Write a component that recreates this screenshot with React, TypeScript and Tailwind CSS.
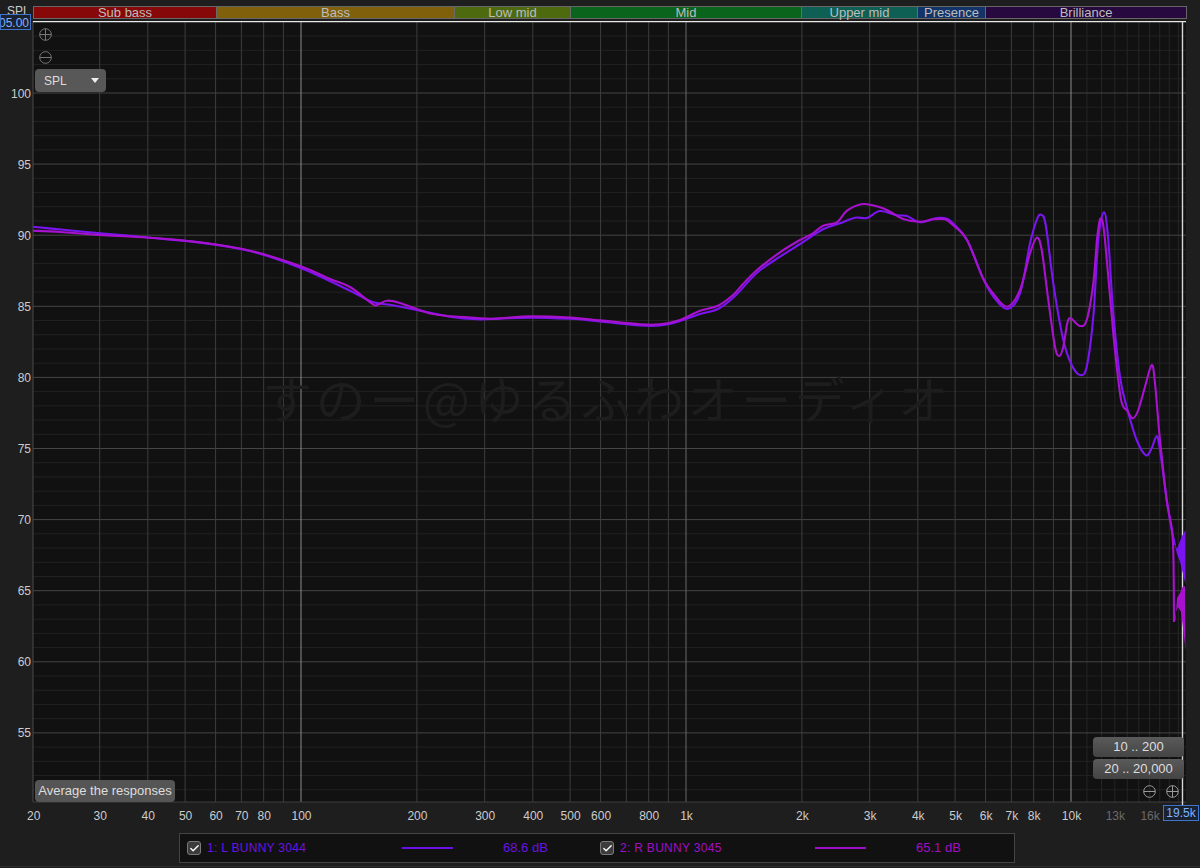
import type { ReactNode } from "react";
import { Check } from "lucide-react";

const bands = [
  { label: "Sub bass", width: "w-[183px]", bg: "bg-[#870808]" },
  { label: "Bass", width: "w-[238px]", bg: "bg-[#80600b]" },
  { label: "Low mid", width: "w-[116px]", bg: "bg-[#4e6a0e]" },
  { label: "Mid", width: "w-[231px]", bg: "bg-[#0a641c]" },
  { label: "Upper mid", width: "w-[116px]", bg: "bg-[#0e6055]" },
  { label: "Presence", width: "w-[68px]", bg: "bg-[#123468]" },
  { label: "Brilliance", width: "w-[201px]", bg: "bg-[#27093f]" },
];

const xOf = (f: number) => 301 + Math.log10(f / 100) * 385;
const yOf = (db: number) => 93 + (100 - db) * 14.22;

const xMajor = [30, 40, 50, 60, 70, 80, 90, 200, 300, 400, 500, 600, 700, 800, 900, 2000, 3000, 4000, 5000, 6000, 7000, 8000, 9000];
const xBright = [100, 10000];
const xMinor = [11000, 12000, 13000, 14000, 15000, 16000, 17000, 18000, 19000];
const xLabels: [number, string, string][] = [
  [20.15, "20", "#cccccc"], [30, "30", "#cccccc"], [40, "40", "#cccccc"], [50, "50", "#cccccc"], [60, "60", "#cccccc"],
  [70, "70", "#cccccc"], [80, "80", "#cccccc"], [100, "100", "#cccccc"], [200, "200", "#cccccc"], [300, "300", "#cccccc"],
  [400, "400", "#cccccc"], [500, "500", "#cccccc"], [600, "600", "#cccccc"], [800, "800", "#cccccc"], [1000, "1k", "#cccccc"],
  [2000, "2k", "#cccccc"], [3000, "3k", "#cccccc"], [4000, "4k", "#cccccc"], [5000, "5k", "#cccccc"], [6000, "6k", "#cccccc"],
  [7000, "7k", "#cccccc"], [8000, "8k", "#cccccc"], [10000, "10k", "#cccccc"], [13000, "13k", "#6a6a6a"], [16000, "16k", "#6a6a6a"],
];
const dbLabels = [100, 95, 90, 85, 80, 75, 70, 65, 60, 55];
const dbMinor: number[] = [];
for (let d = 51; d <= 105; d++) if (d % 5 !== 0) dbMinor.push(d);

// traced from the picture, page pixels
const left: [number, number][] = [
  [33, 226.7], [66, 230], [100, 233.3], [150, 237.7], [200, 242.6], [250, 251], [300, 267.7], [350, 290.7], [372, 301.7], [393, 305.3],
  [417, 310], [450, 316.7], [477, 319.3], [500, 318.6], [530, 317.6], [570, 318.8], [600, 321.5], [640, 325.5], [660, 325.5], [680, 321],
  [700, 314], [718, 309], [735, 296], [757, 272.7], [780, 256.7], [800, 244], [823, 229.3], [840, 223.3], [855, 217.7], [867, 218],
  [880, 211], [897, 215.3], [907, 216], [920, 222.3], [937, 218], [947, 218.7], [953, 223.3], [967, 240], [983, 278.3], [993, 296],
  [1007, 309], [1020, 293.3], [1030, 243.3], [1036.7, 220], [1041, 214.7], [1045.7, 225], [1053.3, 283.3], [1063.3, 340], [1071.7, 365],
  [1080, 375], [1086.7, 366.7], [1093.3, 316.7], [1098.3, 240], [1104, 212.3], [1108.3, 240], [1113.3, 313.3], [1120, 376.7], [1126.7, 406.7],
  [1136.7, 440], [1146, 455.3], [1151.7, 448], [1156.7, 436], [1160, 450], [1166.7, 500], [1171.7, 530], [1175, 545],
];
const right: [number, number][] = [
  [33, 230.7], [60, 232], [100, 235], [150, 237.7], [200, 242.3], [250, 250.7], [300, 266], [330, 279], [350, 287], [373, 304.3], [378, 304.5],
  [387, 300.7], [400, 303], [433, 314], [467, 317.3], [490, 318.7], [510, 317.6], [530, 316.4], [570, 317.6], [600, 320.4], [640, 324.3], [660, 324.3], [680, 320],
  [700, 310.7], [718, 305.7], [733, 295], [743, 284], [757, 270], [780, 252.3], [800, 240], [813, 233.3], [823, 225.7], [837, 222.3], [847, 210.7],
  [863, 204], [880, 207.3], [890, 211.7], [903, 219], [920, 221.7], [933, 219.3], [945, 219.3], [953, 225], [967, 240], [983, 278.3], [993, 293.3],
  [1007, 306.7], [1020, 290], [1030, 253.3], [1036.7, 237.7], [1041.7, 250], [1048.3, 300], [1055, 346.7], [1059.3, 356], [1063.3, 346.7],
  [1067.3, 323.3], [1070.7, 318.3], [1080, 326], [1086.7, 320], [1093.3, 283.3], [1097.3, 236.7], [1101, 218.3], [1105, 240], [1113.3, 333.3],
  [1120, 393.3], [1123.3, 406.7], [1126.7, 410], [1132.7, 418.3], [1138.3, 410], [1145, 386.7], [1151.7, 365], [1155, 383.3], [1160, 440],
  [1166.7, 500], [1172, 530], [1173.5, 560], [1174, 622],
];

function smooth(pts: [number, number][]) {
  let d = `M${pts[0][0]} ${pts[0][1]}`;
  for (let i = 0; i < pts.length - 1; i++) {
    const p0 = pts[Math.max(i - 1, 0)];
    const p1 = pts[i];
    const p2 = pts[i + 1];
    const p3 = pts[Math.min(i + 2, pts.length - 1)];
    const c1x = p1[0] + (p2[0] - p0[0]) / 6;
    const c1y = p1[1] + (p2[1] - p0[1]) / 6;
    const c2x = p2[0] - (p3[0] - p1[0]) / 6;
    const c2y = p2[1] - (p3[1] - p1[1]) / 6;
    d += ` C${c1x.toFixed(1)} ${c1y.toFixed(1)} ${c2x.toFixed(1)} ${c2y.toFixed(1)} ${p2[0]} ${p2[1]}`;
  }
  return d;
}

function RoundIcon({ plus, className }: { plus?: boolean; className: string }) {
  return (
    <svg width="13" height="13" viewBox="0 0 13 13" fill="none" stroke="currentColor" strokeWidth="1" className={className}>
      <circle cx="6.5" cy="6.5" r="5.8" />
      <path d="M0.7 6.5H12.3" />
      {plus && <path d="M6.5 0.7V12.3" />}
    </svg>
  );
}

function Chart() {
  return (
    <svg width="1200" height="808" viewBox="0 21 1200 808" className="block font-['Liberation_Sans',sans-serif]">
      <rect x="33" y="21" width="1153" height="781" fill="#111111" />
      {dbMinor.map((d) => (
        <line key={d} x1="33" x2="1186" y1={yOf(d)} y2={yOf(d)} stroke="#222222" strokeWidth="1" />
      ))}
      {xMinor.map((f) => (
        <line key={f} x1={xOf(f)} x2={xOf(f)} y1="21" y2="802" stroke="#262626" strokeWidth="1" />
      ))}
      {dbLabels.map((d) => (
        <line key={d} x1="33" x2="1186" y1={yOf(d)} y2={yOf(d)} stroke="#454545" strokeWidth="1" />
      ))}
      {xMajor.map((f) => (
        <line key={f} x1={xOf(f)} x2={xOf(f)} y1="21" y2="802" stroke="#3d3d3d" strokeWidth="1" />
      ))}
      <line x1={xOf(1000)} x2={xOf(1000)} y1="21" y2="802" stroke="#5c5c5c" strokeWidth="1.2" />
      {xBright.map((f) => (
        <line key={f} x1={xOf(f)} x2={xOf(f)} y1="21" y2="802" stroke="#8c8c8c" strokeWidth="1" />
      ))}
      <line x1="33" x2="33" y1="21" y2="802" stroke="#4a4a4a" strokeWidth="1" />
      <line x1="33" x2="1186" y1="802" y2="802" stroke="#3f3f3f" strokeWidth="1" />
      <line x1="33" x2="1186" y1="21.5" y2="21.5" stroke="#e8e8e8" strokeWidth="1.4" />
      <line x1="1182.5" x2="1182.5" y1="21" y2="808" stroke="#d8d8d8" strokeWidth="1.4" />

      <text x="607" y="419" textAnchor="middle" fontSize="50" letterSpacing="3.5" fill="#1d1d1d" className="font-['Noto_Sans_CJK_JP',sans-serif]">
        すのー@ゆるふわオーディオ
      </text>

      <path d={smooth(left)} fill="none" stroke="#7a14f0" strokeWidth="2.1" />
      <path d="M1174 541 L1177 549 L1180 541 L1182 536 L1185.5 530 L1185.5 584 L1183 574 L1180 562 L1177 554 Z" fill="#7a14f0" />
      <path d={smooth(right)} fill="none" stroke="#a812cf" strokeWidth="2.1" />
      <path d="M1174 622 L1175.5 620 L1177 598 L1180 593 L1182.5 587 L1185 586 L1185.5 651 L1184 636 L1181 612 L1178 607 L1176 612 Z" fill="#a812cf" />

      {dbLabels.map((d) => (
        <text key={d} x="31" y={yOf(d) + 4.5} textAnchor="end" fontSize="12" fill="#cccccc">
          {d}
        </text>
      ))}
      {xLabels.map(([f, label, color]) => (
        <text key={label} x={xOf(f) + 0.5} y="820" textAnchor="middle" fontSize="12" fill={color}>
          {label}
        </text>
      ))}
    </svg>
  );
}

function Channel({ name, db, color, lineClass, gap }: { name: string; db: string; color: string; lineClass: string; gap: string }) {
  return (
    <div className={`flex items-center ${gap}`}>
      <span className="flex h-[14px] w-[14px] items-center justify-center rounded-[3px] border border-[#7a7a7a] bg-[#3c3c3c]">
        <Check size={11} strokeWidth={3} className="text-white" />
      </span>
      <span className={`ml-[6px] w-[195px] text-[12px] tracking-[0.3px] ${color}`}>{name}</span>
      <span className={`h-[2px] w-[51px] ${lineClass}`}></span>
      <span className={`ml-[50px] text-[13px] ${color}`}>{db}</span>
    </div>
  );
}

function PillButton({ children, className }: { children: ReactNode; className: string }) {
  return (
    <button className={`flex items-center justify-center rounded-[4px] text-[13px] text-[#dddddd] ${className}`}>
      {children}
    </button>
  );
}

export default function App() {
  return (
    <div className="relative h-[868px] w-[1200px] overflow-hidden bg-[#1e1e1e] font-['Liberation_Sans',sans-serif]">
      {/* Band row */}
      <div className="flex h-[21px] pt-[6px]">
        <div className="w-[33px] pl-[7px] text-[12px] leading-[11px] text-[#cccccc]">SPL</div>
        <div className="flex h-[13px] border-y border-r border-[#666666]">
          {bands.map((b) => (
            <div
              key={b.label}
              className={`flex items-center justify-center border-l border-[#6a6a6a] text-[13px] text-[#bdbdbd] ${b.width} ${b.bg}`}
            >
              {b.label}
            </div>
          ))}
        </div>
      </div>

      <Chart />

      {/* Legend */}
      <div className="ml-[179px] mt-[4px] flex h-[30px] w-[836px] items-center border border-[#444444] bg-[#111111] pl-[7px]">
        <Channel name="1: L BUNNY 3044" db="68.6 dB" color="text-[#6a12e6]" lineClass="bg-[#6a12e6]" gap="w-[413px]" />
        <Channel name="2: R BUNNY 3045" db="65.1 dB" color="text-[#a00fc8]" lineClass="bg-[#a00fc8]" gap="" />
      </div>
      <div className="mt-[3px] h-px bg-[#2c2c2c]"></div>

      {/* Overlays on the plot */}
      <div className="absolute left-0 top-[14px] flex h-[16px] w-[31px] items-center justify-end overflow-hidden border border-[#3f74cc] bg-[#1a2230] pr-[1px] pt-[2px] text-[12px] text-[#7fb2ff]">
        105.00
      </div>
      <RoundIcon plus className="absolute left-[39px] top-[28px] text-[#777777]" />
      <RoundIcon className="absolute left-[39px] top-[51px] text-[#777777]" />
      <div className="absolute left-[35px] top-[69px] flex h-[23px] w-[71px] items-center justify-between rounded-[4px] bg-[#585858] pl-[9px] pr-[7px] text-[12px] text-[#dddddd]">
        SPL
        <span className="h-0 w-0 border-x-[4.5px] border-t-[5px] border-x-transparent border-t-[#eeeeee]"></span>
      </div>
      <PillButton className="absolute left-[35px] top-[780px] h-[22px] w-[140px] bg-[#555555]">Average the responses</PillButton>
      <PillButton className="absolute left-[1093px] top-[737px] h-[20px] w-[91px] bg-linear-to-b from-[#5a5a5a] to-[#444444]">10 .. 200</PillButton>
      <PillButton className="absolute left-[1093px] top-[759px] h-[20px] w-[91px] bg-linear-to-b from-[#5a5a5a] to-[#444444]">20 .. 20,000</PillButton>
      <RoundIcon className="absolute left-[1142.5px] top-[784.5px] text-[#9a9a9a]" />
      <RoundIcon plus className="absolute left-[1166px] top-[784.5px] text-[#9a9a9a]" />
      <div className="absolute left-[1163px] top-[805px] flex h-[16px] w-[36px] items-center justify-center border border-[#3f74cc] bg-[#1a2230] text-[12px] text-[#7fb2ff]">
        19.5k
      </div>
    </div>
  );
}
